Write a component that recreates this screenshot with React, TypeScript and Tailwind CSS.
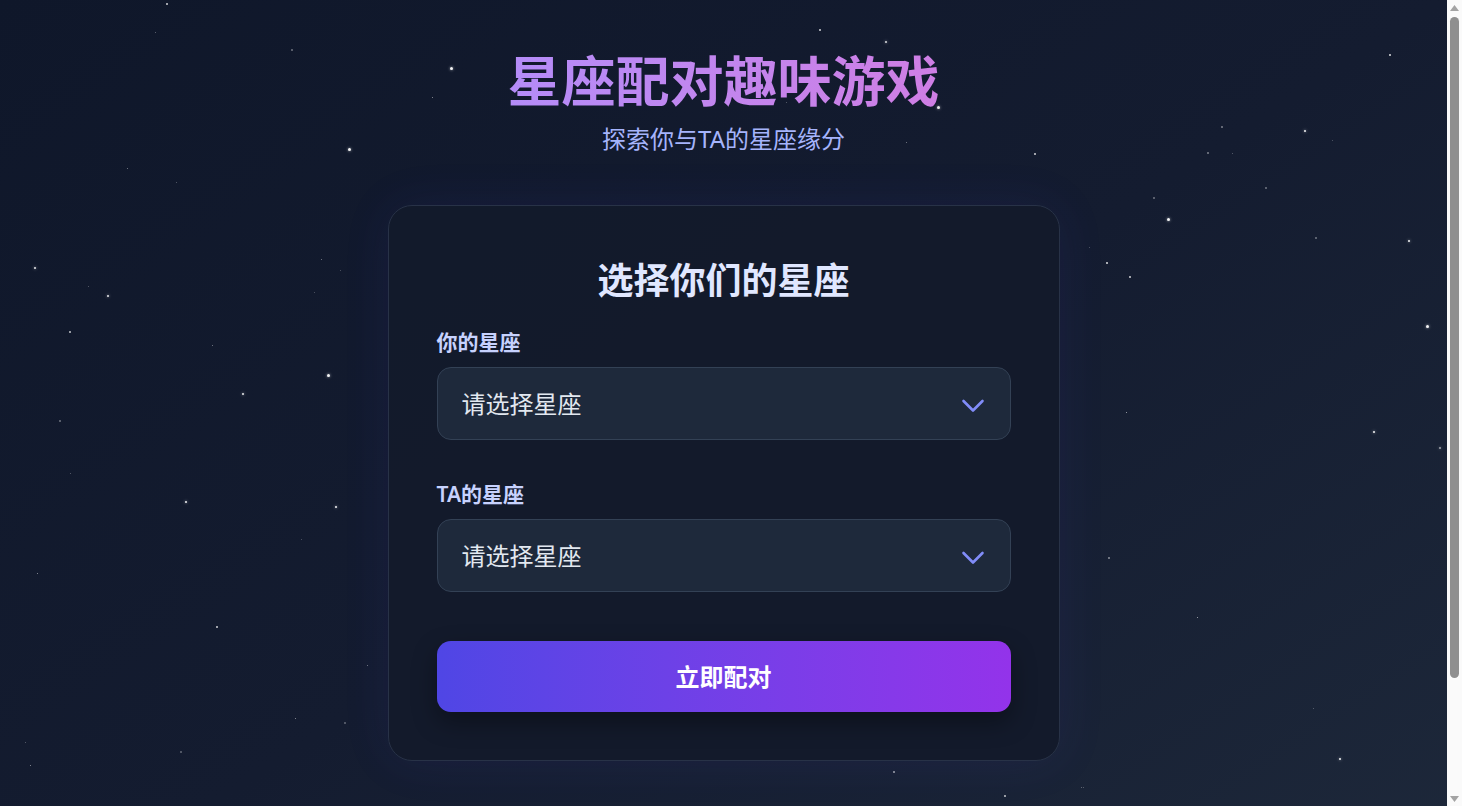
import React from "react";

type Star = [number, number, number, number];
// x, y, size, opacity
const stars: Star[] = [
  [167, 4, 2, 0.8], [155, 32, 1, 0.4], [292, 50, 2, 0.4], [349, 149, 3, 0.95], [127, 168, 1, 0.5],
  [176, 182, 1, 0.35], [35, 268, 2.5, 0.9], [88, 286, 1, 0.35], [108, 296, 2.5, 0.9], [70, 332, 2, 0.75],
  [321, 259, 1, 0.5], [340, 270, 1, 0.3], [314, 292, 1, 0.3], [212, 345, 1, 0.5], [328, 375, 3, 0.95],
  [243, 394, 2.5, 0.9], [60, 421, 2, 0.4], [70, 473, 1, 0.35], [186, 502, 2.5, 0.95], [336, 507, 2.5, 0.95],
  [301, 539, 1, 0.3], [37, 573, 1, 0.6], [217, 627, 2, 0.8], [367, 665, 1, 0.5], [295, 718, 1, 0.6],
  [345, 723, 2, 0.35], [25, 742, 1, 0.35], [181, 752, 2, 0.35], [30, 765, 1, 0.6],
  [451, 68, 3, 0.95], [432, 97, 1, 0.6], [820, 30, 2, 0.8], [886, 42, 2.5, 0.85], [938, 107, 3, 0.9],
  [786, 102, 1, 0.35], [906, 142, 1, 0.5], [1035, 154, 2, 0.8], [894, 772, 2, 0.6], [1005, 796, 2, 0.75],
  [1081, 787, 1, 0.4],
  [1390, 55, 2, 0.85], [1222, 127, 1.5, 0.45], [1305, 131, 2.5, 0.95], [1332, 140, 1, 0.3], [1208, 153, 1.5, 0.45],
  [1232, 153, 1, 0.35], [1266, 188, 2, 0.4], [1154, 198, 2, 0.4], [1168, 219, 3, 0.95], [1316, 238, 2, 0.4],
  [1089, 247, 1, 0.3], [1107, 263, 2, 0.85], [1130, 277, 1.5, 0.8], [1409, 241, 2.5, 0.95], [1427, 326, 3, 0.95],
  [1126, 412, 1, 0.7], [1374, 432, 2.5, 0.95], [1440, 448, 2.5, 0.6], [1109, 558, 2, 0.5], [1197, 617, 1, 0.7],
  [1313, 708, 1, 0.35], [1340, 759, 2.5, 0.95], [1083, 787, 1, 0.35],
];

function Chevron() {
  return (
    <svg width="24" height="14" viewBox="0 0 24 14" fill="none" className="absolute right-[25px] top-1/2 -translate-y-[calc(50%-2px)] pointer-events-none">
      <polyline points="2.5,2 12,11.5 21.5,2" stroke="#818cf8" strokeWidth="2.6" strokeLinecap="round" strokeLinejoin="round" />
    </svg>
  );
}

function SelectBox() {
  return (
    <div className="relative h-[73px] w-full rounded-[14px] border border-[#334155] bg-[#1e293b] flex items-center pl-[24px]">
      <span className="text-[24px] text-[#e2e8f0] leading-none">请选择星座</span>
      <Chevron />
    </div>
  );
}

function ScrollStrip() {
  return (
    <div className="flex h-screen w-[15px] shrink-0 flex-col items-center bg-[#fafafa]">
      <svg width="9" height="6" viewBox="0 0 9 6" className="mt-[5px]">
        <polygon points="4.5,0 9,6 0,6" fill="#a3a3a3" />
      </svg>
      <div className="mt-[6px] h-[661px] w-[9px] rounded-full bg-[#8f8f8f]" />
      <div className="flex-1" />
      <svg width="9" height="6" viewBox="0 0 9 6" className="mb-[4px]">
        <polygon points="0,0 9,0 4.5,6" fill="#a3a3a3" />
      </svg>
    </div>
  );
}

export default function App() {
  return (
    <div className="flex h-screen w-full overflow-hidden" style={{ fontFamily: '"Noto Sans", "Noto Sans CJK SC", sans-serif' }}>
      <main className="relative h-screen flex-1 overflow-hidden">
        <div className="relative min-h-[944px] w-full bg-gradient-to-br from-[#0f172a] via-[#141c30] to-[#1e293b]">
          <div className="absolute inset-0 pointer-events-none">
            {stars.map(([x, y, s, o], i) => (
              <span
                key={i}
                className="absolute rounded-full bg-white"
                style={{
                  left: x - s / 2,
                  top: y - s / 2,
                  width: s,
                  height: s,
                  opacity: o,
                  boxShadow: s >= 2.5 ? "0 0 3px rgba(255,255,255,0.7)" : undefined,
                }}
              />
            ))}
          </div>

          <div className="relative flex flex-col items-center pt-[48px] pb-[183px]">
            <h1 className="text-[54px] leading-[67px] font-bold bg-gradient-to-r from-[#b48cf8] to-[#cf7ee4] bg-clip-text text-transparent">
              星座配对趣味游戏
            </h1>
            <p className="mt-[6px] text-[24px] leading-[36px] text-[#a5b4fc]">探索你与TA的星座缘分</p>

            <div className="mt-[48px] w-[672px] rounded-[24px] border border-[#283247] bg-[#131a2b]/95 p-12 shadow-[0_0_50px_rgba(79,70,229,0.09)]">
              <h2 className="text-center text-[36px] leading-[54px] font-bold text-[#e0e7ff] mb-[19px]">选择你们的星座</h2>

              <label className="block text-[21px] leading-[30px] font-semibold text-[#c7d2fe] mb-[10px]">你的星座</label>
              <SelectBox />

              <label className="block mt-[39px] text-[21px] leading-[30px] font-semibold text-[#c7d2fe] mb-[10px]">TA的星座</label>
              <SelectBox />

              <button className="mt-[49px] h-[71px] w-full rounded-[14px] bg-gradient-to-r from-[#4f46e5] to-[#9333ea] text-white text-[24px] font-bold shadow-[0_10px_25px_rgba(0,0,0,0.35)]">
                立即配对
              </button>
            </div>
          </div>
        </div>
      </main>
      <ScrollStrip />
    </div>
  );
}
